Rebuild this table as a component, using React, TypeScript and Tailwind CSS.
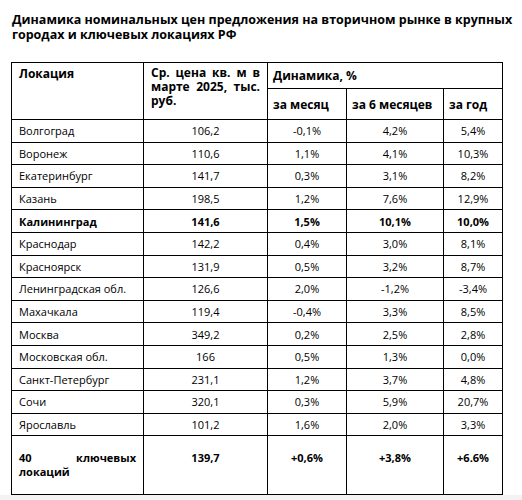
const rows: [string, string, string, string, string, boolean?][] = [
  ["Волгоград", "106,2", "-0,1%", "4,2%", "5,4%"],
  ["Воронеж", "110,6", "1,1%", "4,1%", "10,3%"],
  ["Екатеринбург", "141,7", "0,3%", "3,1%", "8,2%"],
  ["Казань", "198,5", "1,2%", "7,6%", "12,9%"],
  ["Калининград", "141,6", "1,5%", "10,1%", "10,0%", true],
  ["Краснодар", "142,2", "0,4%", "3,0%", "8,1%"],
  ["Красноярск", "131,9", "0,5%", "3,2%", "8,7%"],
  ["Ленинградская обл.", "126,6", "2,0%", "-1,2%", "-3,4%"],
  ["Махачкала", "119,4", "-0,4%", "3,3%", "8,5%"],
  ["Москва", "349,2", "0,2%", "2,5%", "2,8%"],
  ["Московская обл.", "166", "0,5%", "1,3%", "0,0%"],
  ["Санкт-Петербург", "231,1", "1,2%", "3,7%", "4,8%"],
  ["Сочи", "320,1", "0,3%", "5,9%", "20,7%"],
  ["Ярославль", "101,2", "1,6%", "2,0%", "3,3%"],
];

const font = "font-['Open_Sans',sans-serif]";

export default function App() {
  return (
    <div className={`h-[500px] flex flex-col bg-white text-black ${font}`}>
      <div className="ml-[12px] mt-[12px] w-[500px] text-[12.5px] leading-[15px] font-bold">
        <div className="whitespace-nowrap text-justify [text-align-last:justify]">
          Динамика номинальных цен предложения на вторичном рынке в крупных
        </div>
        <div>городах и ключевых локациях РФ</div>
      </div>

      <table className="ml-[11px] mt-[20px] w-[491px] table-fixed border-collapse text-[11px] leading-[13px]">
        <colgroup>
          <col className="w-[132px]" />
          <col className="w-[124px]" />
          <col className="w-[79px]" />
          <col className="w-[97px]" />
          <col className="w-[59px]" />
        </colgroup>
        <thead className="text-[12px] font-bold">
          <tr className="h-[26px]">
            <th rowSpan={2} className="border border-black align-top text-left px-[7px] pt-[4px] font-bold">
              Локация
            </th>
            <th rowSpan={2} className="border border-black align-top text-left px-[7px] pt-[3px] leading-[14px] font-bold">
              <div className="whitespace-nowrap text-justify [text-align-last:justify]">Ср. цена кв. м в</div>
              <div className="whitespace-nowrap text-justify [text-align-last:justify]">марте 2025, тыс.</div>
              <div>руб.</div>
            </th>
            <th colSpan={3} className="border border-black text-left px-[5px] py-0 font-bold">
              Динамика, %
            </th>
          </tr>
          <tr className="h-[31px]">
            <th className="border border-black text-left px-[5px] py-0 whitespace-nowrap font-bold">за месяц</th>
            <th className="border border-black text-left px-[5px] py-0 whitespace-nowrap font-bold">за 6 месяцев</th>
            <th className="border border-black text-left px-[5px] py-0 whitespace-nowrap font-bold">за год</th>
          </tr>
        </thead>
        <tbody>
          {rows.map((r, i) => (
            <tr key={i} className={`h-[22.6px] ${r[5] ? "font-bold" : ""}`}>
              <td className="border border-black px-[7px] py-0 text-left whitespace-nowrap">{r[0]}</td>
              <td className="border border-black py-0 text-center">{r[1]}</td>
              <td className="border border-black py-0 text-center">{r[2]}</td>
              <td className="border border-black py-0 text-center">{r[3]}</td>
              <td className="border border-black py-0 text-center">{r[4]}</td>
            </tr>
          ))}
          <tr className="h-[59px] font-bold leading-[14px]">
            <td className="border border-black align-top px-[7px] pt-[15px]">
              <div className="whitespace-nowrap text-justify [text-align-last:justify]">40 ключевых</div>
              <div>локаций</div>
            </td>
            <td className="border border-black align-top text-center pt-[15px]">139,7</td>
            <td className="border border-black align-top text-center pt-[15px]">+0,6%</td>
            <td className="border border-black align-top text-center pt-[15px]">+3,8%</td>
            <td className="border border-black align-top text-center pt-[15px]">+6.6%</td>
          </tr>
        </tbody>
      </table>
      <div className="flex-1" />
      <div className="h-[5px] bg-[#f3f3f3]" />
    </div>
  );
}
